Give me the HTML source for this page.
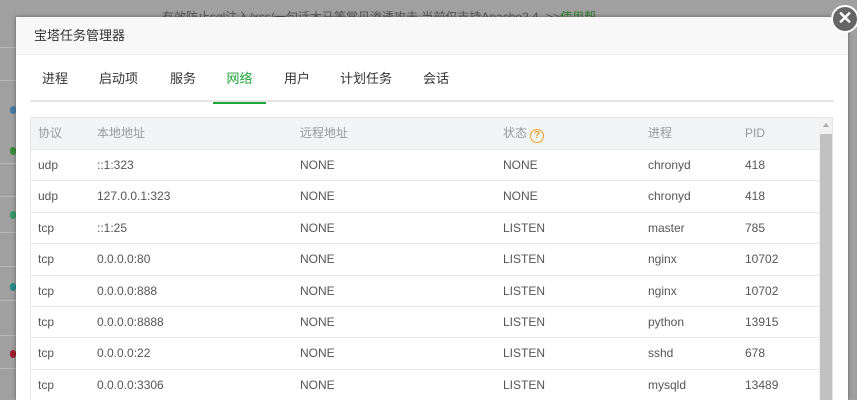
<!DOCTYPE html>
<html style="width:857px;height:400px;overflow:hidden"><head><meta charset="utf-8"><style>
*{margin:0;padding:0;box-sizing:border-box}
body{width:857px;height:400px;overflow:hidden;background:#a0a0a0;font-family:"Liberation Sans","Noto Sans CJK SC",sans-serif;position:relative}
.bgtext{position:absolute;left:162px;top:8px;font-size:12px;color:#555;white-space:nowrap}
.bgtext span{color:#2f7a2f}
.hl{position:absolute;left:0;width:16px;height:1px;background:#b8b8b8}
.ic{position:absolute;left:10px;width:6px;height:8px;border-radius:3px}
.modal{position:absolute;left:16px;top:17px;width:832px;height:383px;background:#fff;box-shadow:0 0 4px rgba(0,0,0,.4);overflow:hidden}
.title{height:38px;background:#f8f8f8;border-bottom:1px solid #eee;font-size:13px;color:#333;line-height:38px;padding-left:18px}
.tabs{position:absolute;left:14px;top:38px;width:804px;height:47px;border-bottom:2px solid #e6e6e6}
.tab{position:absolute;top:0;height:47px;line-height:47px;font-size:13px;color:#333}
.tab.on{color:#20a53a;border-bottom:2px solid #20a53a;height:49px}
.tbl{position:absolute;left:14px;top:100px;width:803px;height:283px;border:1px solid #e6e6e6;border-bottom:none;overflow:hidden}
.row{position:absolute;left:0;width:788px;height:31.4px;border-bottom:1px solid #e8e8e8;font-size:12px;color:#555}
.row.h{background:#f2f4f6;color:#999;height:32px}
.row div{position:absolute;top:0;line-height:30px;white-space:nowrap}
.q{display:inline-block;width:14px;height:14px;border:1.5px solid #f0a02c;border-radius:50%;color:#f0a02c;font-size:10px;line-height:11px;text-align:center;vertical-align:-1px;margin-left:3px;font-weight:bold}
.sb{position:absolute;left:788px;top:0;width:14px;height:283px;background:#f1f1f1}
.thumb{position:absolute;left:1px;top:16px;width:12px;height:267px;background:#c1c1c1}
.close{position:absolute;left:831px;top:5px;width:28px;height:28px;border-radius:50%;background:#666;border:2px solid #fff;color:#fff;text-align:center;font-size:18px;line-height:23px;font-weight:bold}
</style></head><body>
<div class="bgtext">有效防止sql注入/xss/一句话木马等常见渗透攻击,当前仅支持Apache2.4 -&gt;&gt;<span>使用帮</span></div>
<div class="hl" style="top:47px"></div><div class="hl" style="top:80px"></div><div class="hl" style="top:163px"></div><div class="hl" style="top:196px"></div><div class="hl" style="top:232px"></div><div class="hl" style="top:266px"></div><div class="hl" style="top:300px"></div><div class="hl" style="top:335px"></div><div class="hl" style="top:368px"></div>
<div class="ic" style="top:106px;background:#4a7aa0"></div>
<div class="ic" style="top:147px;background:#3a8a3a"></div>
<div class="ic" style="top:211px;background:#3a9a6a"></div>
<div class="ic" style="top:283px;background:#2a8a8a"></div>
<div class="ic" style="top:350px;background:#a02030"></div>
<div class="modal">
<div class="title">宝塔任务管理器</div>
<div class="tabs">
<div class="tab" style="left:12px">进程</div>
<div class="tab" style="left:69px">启动项</div>
<div class="tab" style="left:140px">服务</div>
<div class="tab on" style="left:183px;width:53px;text-align:center">网络</div>
<div class="tab" style="left:254px">用户</div>
<div class="tab" style="left:310px">计划任务</div>
<div class="tab" style="left:393px">会话</div>
</div>
<div class="tbl">
<div class="row h" style="top:0"><div style="left:7px">协议</div><div style="left:66px">本地地址</div><div style="left:269px">远程地址</div><div style="left:472px">状态<span class="q">?</span></div><div style="left:617px">进程</div><div style="left:714px">PID</div></div>
<div class="row" style="top:32px"><div style="left:7px">udp</div><div style="left:66px">::1:323</div><div style="left:269px">NONE</div><div style="left:472px">NONE</div><div style="left:617px">chronyd</div><div style="left:714px">418</div></div>
<div class="row" style="top:63.4px"><div style="left:7px">udp</div><div style="left:66px">127.0.0.1:323</div><div style="left:269px">NONE</div><div style="left:472px">NONE</div><div style="left:617px">chronyd</div><div style="left:714px">418</div></div>
<div class="row" style="top:94.8px"><div style="left:7px">tcp</div><div style="left:66px">::1:25</div><div style="left:269px">NONE</div><div style="left:472px">LISTEN</div><div style="left:617px">master</div><div style="left:714px">785</div></div>
<div class="row" style="top:126.2px"><div style="left:7px">tcp</div><div style="left:66px">0.0.0.0:80</div><div style="left:269px">NONE</div><div style="left:472px">LISTEN</div><div style="left:617px">nginx</div><div style="left:714px">10702</div></div>
<div class="row" style="top:157.6px"><div style="left:7px">tcp</div><div style="left:66px">0.0.0.0:888</div><div style="left:269px">NONE</div><div style="left:472px">LISTEN</div><div style="left:617px">nginx</div><div style="left:714px">10702</div></div>
<div class="row" style="top:189px"><div style="left:7px">tcp</div><div style="left:66px">0.0.0.0:8888</div><div style="left:269px">NONE</div><div style="left:472px">LISTEN</div><div style="left:617px">python</div><div style="left:714px">13915</div></div>
<div class="row" style="top:220.4px"><div style="left:7px">tcp</div><div style="left:66px">0.0.0.0:22</div><div style="left:269px">NONE</div><div style="left:472px">LISTEN</div><div style="left:617px">sshd</div><div style="left:714px">678</div></div>
<div class="row" style="top:251.8px;height:31px"><div style="left:7px">tcp</div><div style="left:66px">0.0.0.0:3306</div><div style="left:269px">NONE</div><div style="left:472px">LISTEN</div><div style="left:617px">mysqld</div><div style="left:714px">13489</div></div>
<div class="sb"><div style="position:absolute;left:4px;top:5px;width:0;height:0;border-left:3px solid transparent;border-right:3px solid transparent;border-bottom:4px solid #aaa"></div><div class="thumb"></div></div>
</div>
</div>
<div class="close">✕</div>
</body></html>
